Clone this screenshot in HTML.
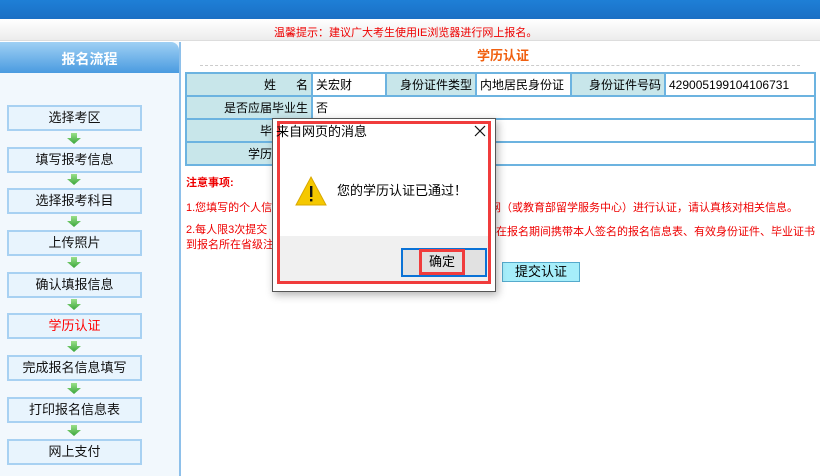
<!DOCTYPE html>
<html><head><meta charset="utf-8"><style>
*{margin:0;padding:0;box-sizing:border-box}
body{width:820px;height:476px;overflow:hidden;background:#fff;font-family:"Liberation Sans","Noto Sans CJK SC",sans-serif;font-size:12px;position:relative}
.a{position:absolute}
.top{left:0;top:0;width:820px;height:19px;background:linear-gradient(#1e7fd6,#1b6fc4)}
.band{left:0;top:19px;width:820px;height:22px;background:linear-gradient(#fff,#ececec);border-bottom:1px solid #ddd}
.side{left:0;top:42px;width:181px;height:434px;background:#f2f8fd;border-right:2px solid #8ec0ea}
.sh{left:0;top:42px;width:179px;height:31px;background:linear-gradient(#9fd0f4,#4a9be0);border-radius:0 8px 0 0;color:#fff;font-weight:bold;font-size:14px;text-align:center;line-height:34px}
.btn{left:7px;width:135px;height:26px;background:#e8f4fd;border:2px solid #a8d1f2;text-align:center;line-height:22px;font-size:13px;color:#111}
table{position:absolute;left:185px;top:72px;width:631px;border-collapse:collapse}
td{border:2px solid #6cb3e0;height:23px;font-size:12px;padding:0 3px}
td.l{background:#c8e6ea;text-align:right}
.red{color:#e00}
</style></head><body>
<div class="a top"></div>
<div class="a band"></div>
<div class="a red" style="left:274px;top:24px;font-size:11px">温馨提示：建议广大考生使用IE浏览器进行网上报名。</div>
<div class="a side"></div>
<div class="a sh">报名流程</div>
<div class="a btn" style="top:105px">选择考区</div>
<div class="a btn" style="top:147px">填写报考信息</div>
<div class="a btn" style="top:188px">选择报考科目</div>
<div class="a btn" style="top:230px">上传照片</div>
<div class="a btn" style="top:272px">确认填报信息</div>
<div class="a btn" style="top:313px;color:#f00">学历认证</div>
<div class="a btn" style="top:355px">完成报名信息填写</div>
<div class="a btn" style="top:397px">打印报名信息表</div>
<div class="a btn" style="top:439px">网上支付</div>
<svg class="a" style="left:0;top:0" width="180" height="476">
<defs><linearGradient id="g" x1="0" y1="0" x2="0" y2="1"><stop offset="0" stop-color="#9be08a"/><stop offset="1" stop-color="#3aa63a"/></linearGradient></defs>
<g fill="url(#g)">
<path d="M71 133h6v5h4l-7 6-7-6h4z"/><path d="M71 174h6v5h4l-7 6-7-6h4z"/><path d="M71 216h6v5h4l-7 6-7-6h4z"/><path d="M71 257h6v5h4l-7 6-7-6h4z"/><path d="M71 299h6v5h4l-7 6-7-6h4z"/><path d="M71 341h6v5h4l-7 6-7-6h4z"/><path d="M71 383h6v5h4l-7 6-7-6h4z"/><path d="M71 425h6v5h4l-7 6-7-6h4z"/>
</g></svg>
<div class="a" style="left:477px;top:45px;color:#f06010;font-weight:bold;font-size:13px">学历认证</div>
<div class="a" style="left:200px;top:65px;width:600px;border-top:1px dashed #ccc"></div>
<table>
<tr><td class="l" style="width:126px">姓&nbsp;&nbsp;&nbsp;&nbsp;&nbsp;&nbsp;名</td><td style="width:74px">关宏财</td><td class="l" style="width:90px">身份证件类型</td><td style="width:95px">内地居民身份证</td><td class="l" style="width:94px">身份证件号码</td><td>429005199104106731</td></tr>
<tr><td class="l">是否应届毕业生</td><td colspan="5">否</td></tr>
<tr><td class="l">毕业院校</td><td colspan="5"></td></tr>
<tr><td class="l">学历认证号</td><td colspan="5"></td></tr>
</table>
<div class="a red" style="left:186px;top:174px;font-weight:bold;font-size:11px">注意事项:</div>
<div class="a red" style="left:186px;top:199px;font-size:11px">1.您填写的个人信</div>
<div class="a red" style="left:490px;top:199px;font-size:11px">网（或教育部留学服务中心）进行认证，请认真核对相关信息。</div>
<div class="a red" style="left:186px;top:223px;font-size:11px;line-height:15px">2.每人限3次提交<br>到报名所在省级注</div>
<div class="a red" style="left:496px;top:223px;font-size:11px">在报名期间携带本人签名的报名信息表、有效身份证件、毕业证书</div>
<div class="a" style="left:502px;top:262px;width:78px;height:20px;background:#a6eefa;border:1px solid #55aacc;text-align:center;line-height:18px;font-size:13px">提交认证</div>
<div class="a" style="left:272px;top:118px;width:224px;height:174px;background:#fff;border:1px solid #555;box-shadow:2px 3px 8px rgba(0,0,0,.3)"></div>
<div class="a" style="left:278px;top:236px;width:212px;height:47px;background:#f0f0f0"></div>
<div class="a" style="left:277px;top:121px;width:214px;height:163px;border:3px solid #f03c3c"></div>
<div class="a" style="left:276px;top:121px;font-size:13px">来自网页的消息</div>
<svg class="a" style="left:473px;top:124px" width="14" height="14"><path d="M2 2L12 12M12 2L2 12" stroke="#111" stroke-width="1.2"/></svg>
<svg class="a" style="left:295px;top:175px" width="32" height="32"><path d="M16 2L31 30H1Z" fill="#f5c800" stroke="#d9a800"/><rect x="15" y="11" width="2.4" height="11" fill="#111"/><rect x="15" y="24" width="2.4" height="2.4" fill="#111"/></svg>
<div class="a" style="left:337px;top:180px;font-size:13px">您的学历认证已通过！</div>
<div class="a" style="left:401px;top:248px;width:86px;height:29px;border:2px solid #0a72d6;background:#e1e1e1"></div>
<div class="a" style="left:419px;top:249px;width:46px;height:26px;border:3px solid #f03c3c;text-align:center;line-height:20px;font-size:13px">确定</div>
</body></html>
